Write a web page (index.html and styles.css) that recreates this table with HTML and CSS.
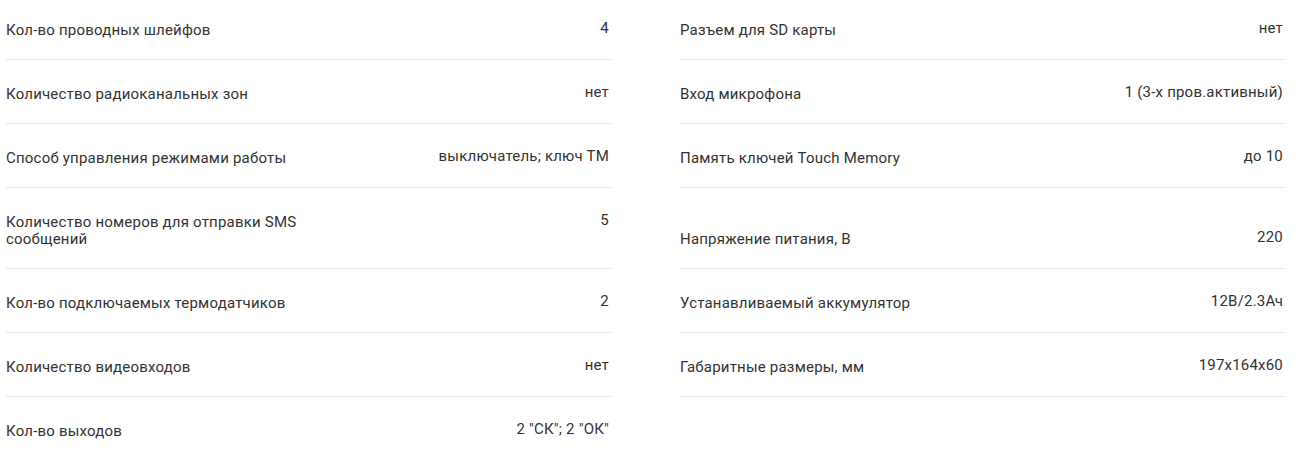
FILE: index.html
```html
<!DOCTYPE html>
<html lang="ru">
<head>
<meta charset="utf-8">
<title>Характеристики</title>
<link rel="stylesheet" href="styles.css">
</head>
<body>
<div class="specs">
  <div class="spec"><div class="line"><span class="label">Кол-во проводных шлейфов</span><span class="value">4</span></div></div>
  <div class="spec"><div class="line"><span class="label">Разъем для SD карты</span><span class="value">нет</span></div></div>
  <div class="spec"><div class="line"><span class="label">Количество радиоканальных зон</span><span class="value">нет</span></div></div>
  <div class="spec"><div class="line"><span class="label">Вход микрофона</span><span class="value">1 (3-х пров.активный)</span></div></div>
  <div class="spec"><div class="line"><span class="label">Способ управления режимами работы</span><span class="value">выключатель; ключ ТМ</span></div></div>
  <div class="spec"><div class="line"><span class="label">Память ключей Touch Memory</span><span class="value">до 10</span></div></div>
  <div class="spec"><div class="line"><span class="label">Количество номеров для отправки SMS сообщений</span><span class="value">5</span></div></div>
  <div class="spec"><div class="line"><span class="label">Напряжение питания, В</span><span class="value">220</span></div></div>
  <div class="spec"><div class="line"><span class="label">Кол-во подключаемых термодатчиков</span><span class="value">2</span></div></div>
  <div class="spec"><div class="line"><span class="label">Устанавливаемый аккумулятор</span><span class="value">12В/2.3Ач</span></div></div>
  <div class="spec"><div class="line"><span class="label">Количество видеовходов</span><span class="value">нет</span></div></div>
  <div class="spec"><div class="line"><span class="label">Габаритные размеры, мм</span><span class="value">197х164х60</span></div></div>
  <div class="spec"><div class="line"><span class="label">Кол-во выходов</span><span class="value">2 "СК"; 2 "ОК"</span></div></div>
</div>
</body>
</html>
```

FILE: styles.css
```css
html, body {
  margin: 0;
  padding: 0;
  background: #ffffff;
}

body {
  font-family: Roboto, "Liberation Sans", sans-serif;
  font-size: 15px;
  letter-spacing: 0.2px;
  color: #333333;
}

.specs {
  display: grid;
  grid-template-columns: 605px 605px;
  column-gap: 69px;
  padding-left: 6px;
  margin-top: -4px;
}

.spec {
  display: flex;
  align-items: flex-end;
  border-bottom: 1px solid #e5e5e5;
  padding: 23px 0 20px;
}

.spec:last-child {
  border-bottom: none;
}

.line {
  display: flex;
  justify-content: space-between;
  align-items: flex-start;
  width: 100%;
}

.label {
  margin-top: 3px;
  line-height: 17px;
  max-width: 300px;
}

.value {
  line-height: 18px;
  text-align: right;
  padding-right: 2px;
}
```
